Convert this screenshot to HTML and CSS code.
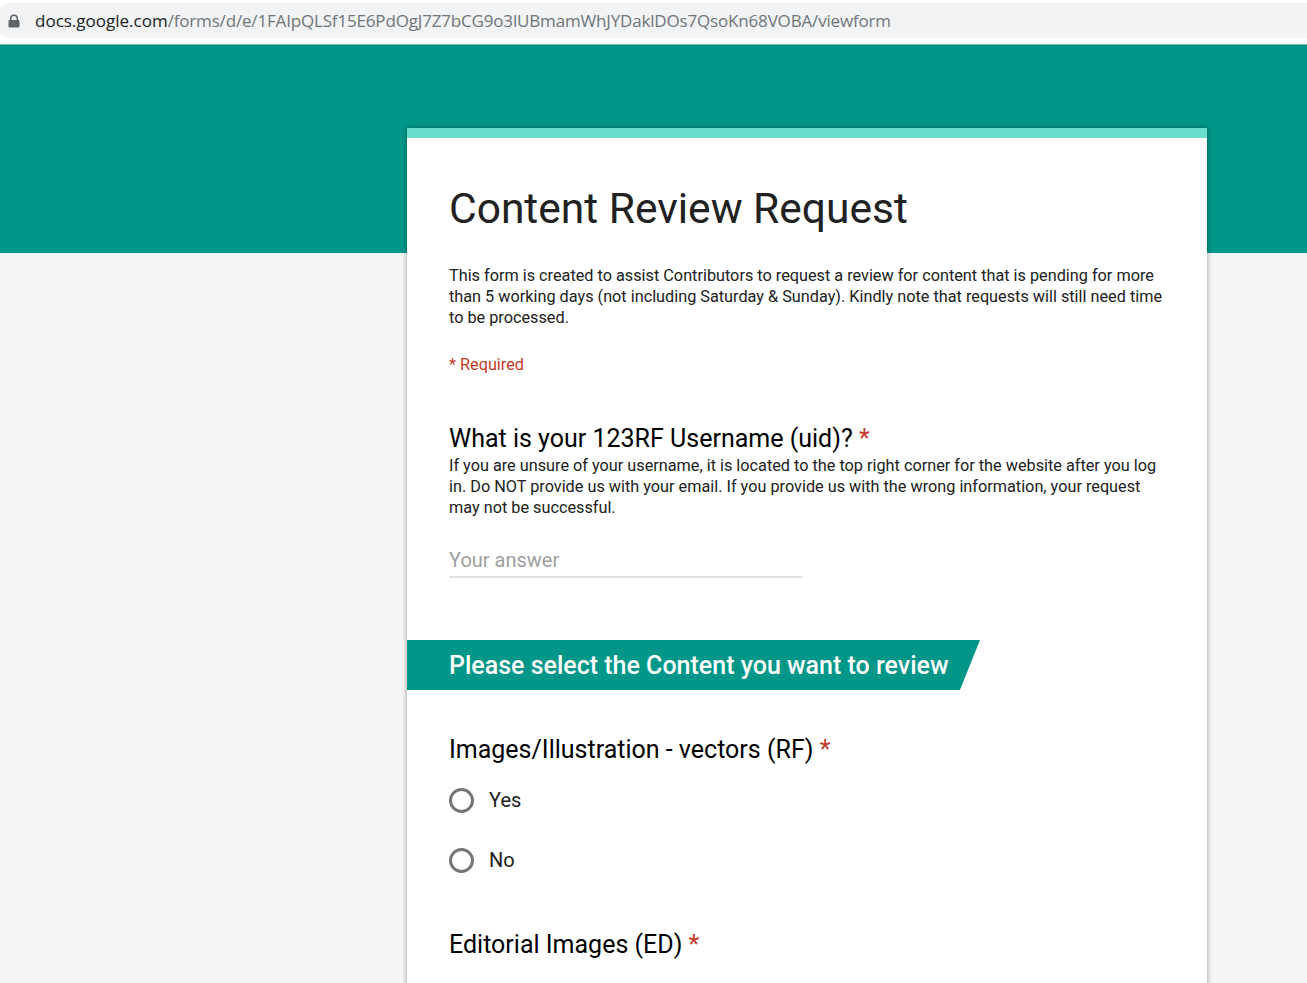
FILE: index.html
```html
<!DOCTYPE html>
<html lang="en">
<head>
<meta charset="utf-8">
<title>Content Review Request</title>
<link rel="stylesheet" href="styles.css">
</head>
<body>
<header class="browser">
  <div class="omnibox">
    <svg class="lock" viewBox="0 0 12 14" width="12" height="14" aria-hidden="true"><path d="M2 6V4.4a4 4 0 0 1 8 0V6h.4c.6 0 1.1.5 1.1 1.1v5.3c0 .6-.5 1.1-1.1 1.1H1.6c-.6 0-1.1-.5-1.1-1.1V7.100C.5 6.500 1 6 1.600 6zm1.500 0h5V4.400a2.500 2.500 0 0 0-5 0z" fill="#5f6368"/></svg>
    <span class="url"><span class="host">docs.google.com</span>/forms/d/e/1FAIpQLSf15E6PdOgJ7Z7bCG9o3lUBmamWhJYDaklDOs7QsoKn68VOBA/viewform</span>
  </div>
</header>
<div class="band"></div>
<main class="card">
  <div class="stripe"></div>
  <section class="intro">
    <h1 class="title">Content Review Request</h1>
    <p class="desc">This form is created to assist Contributors to request a review for content that is pending for more<br>than 5 working days (not including Saturday &amp; Sunday). Kindly note that requests will still need time<br>to be processed.</p>
    <p class="required">* Required</p>
  </section>
  <section class="q q-user">
    <h2 class="qtitle">What is your 123RF Username (uid)? <span class="star">*</span></h2>
    <p class="qhelp">If you are unsure of your username, it is located to the top right corner for the website after you log<br>in. Do NOT provide us with your email. If you provide us with the wrong information, your request<br>may not be successful.</p>
    <div class="answer">Your answer</div>
  </section>
  <div class="banner">Please select the Content you want to review</div>
  <section class="q q-images">
    <h2 class="qtitle">Images/Illustration - vectors (RF) <span class="star">*</span></h2>
    <div class="options">
      <div class="option"><span class="radio"></span><span>Yes</span></div>
      <div class="option"><span class="radio"></span><span>No</span></div>
    </div>
  </section>
  <section class="q q-editorial">
    <h2 class="qtitle">Editorial Images (ED) <span class="star">*</span></h2>
  </section>
</main>
</body>
</html>
```
FILE: styles.css
```css
html, body { margin: 0; height: 983px; overflow: hidden; }
body { background: #f5f5f5; font-family: Roboto, sans-serif; color: #202124; }
.browser { height: 45px; box-sizing: border-box; background: #fff; padding-top: 3px; border-bottom: 1px solid #7fb8ae; }
.omnibox { height: 35px; background: #f1f3f4; border-radius: 12px 0 0 12px; display: flex; align-items: center; padding-left: 8px; margin-left: -2px; }
.lock { flex: none; margin-left: 2px; }
.url { margin-left: 15px; font-family: "Open Sans", sans-serif; font-size: 17px; color: #70757a; white-space: nowrap; letter-spacing: -0.17px; }
.host { color: #202124; letter-spacing: 0; }
.band { height: 208px; background: #009688; }
.card { width: 800px; height: 900px; margin: -125px 0 0 407px; background: #fff; box-shadow: 0 0 5px rgba(0,0,0,.4); }
.stripe { height: 10px; background: #69ddcb; }
.intro { padding: 46px 42px 0; }
.title { margin: 0; font-size: 42.5px; line-height: 50px; font-weight: 400; color: #212121; }
.desc { margin: 31px 0 0; font-size: 16.25px; line-height: 21px; color: #212121; }
.required { margin: 26px 0 0; font-size: 16.25px; line-height: 21px; color: #c53929; }
.q { padding: 0 42px; }
.q-user { padding-top: 49px; }
.qtitle { margin: 0; font-size: 25px; line-height: 30px; font-weight: 400; color: #000; }
.star { color: #c53929; }
.qhelp { margin: 1px 0 0; font-size: 16.25px; line-height: 21px; color: #212121; }
.answer { width: 353px; height: 35px; margin-top: 25px; box-sizing: border-box; border-bottom: 2px solid #e0e0e0; font-size: 20px; line-height: 35px; color: #a0a0a0; }
.banner { width: 531px; height: 50px; margin-top: 62px; padding-left: 42px; background: #009688; color: #fff; font-size: 25px; font-weight: 500; line-height: 51px; clip-path: polygon(0 0, 100% 0, 96.500% 100%, 0 100%); }
.q-images { padding-top: 45px; }
.options { margin-top: 5px; }
.option { display: flex; align-items: center; gap: 15px; height: 60px; font-size: 20px; color: #212121; }
.radio { width: 25px; height: 25px; box-sizing: border-box; border: 3px solid #757575; border-radius: 50%; }
.q-editorial { padding-top: 40px; }
```
